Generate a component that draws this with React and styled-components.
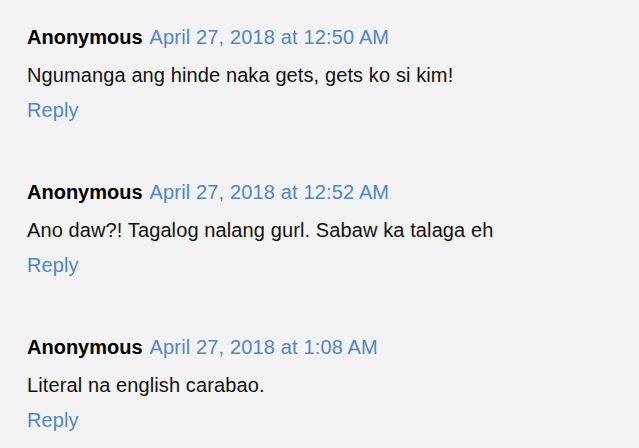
import React from "react";
import styled, { createGlobalStyle } from "styled-components";

const GlobalStyle = createGlobalStyle`
  html, body {
    margin: 0;
    background: #f3f3f3;
  }
`;

const comments = [
  {
    author: "Anonymous",
    date: "April 27, 2018 at 12:50 AM",
    text: "Ngumanga ang hinde naka gets, gets ko si kim!",
  },
  {
    author: "Anonymous",
    date: "April 27, 2018 at 12:52 AM",
    text: "Ano daw?! Tagalog nalang gurl. Sabaw ka talaga eh",
  },
  {
    author: "Anonymous",
    date: "April 27, 2018 at 1:08 AM",
    text: "Literal na english carabao.",
  },
];

export default function App() {
  return (
    <>
      <GlobalStyle />
      <CommentList>
        {comments.map((c, i) => (
          <Comment key={i}>
            <Header>
              <Author>{c.author}</Author>
              <DateLink href="#">{c.date}</DateLink>
            </Header>
            <Body>{c.text}</Body>
            <ReplyLink href="#">Reply</ReplyLink>
          </Comment>
        ))}
      </CommentList>
    </>
  );
}

const CommentList = styled.div`
  display: flex;
  flex-direction: column;
  gap: 58px;
  padding: 25px 0 0 27px;
  font-family: "Liberation Sans", Arial, sans-serif;
  font-size: 20px;
  line-height: 24px;
  color: #111;
`;

const Comment = styled.div`
  display: flex;
  flex-direction: column;
  align-items: flex-start;
`;

const Header = styled.div`
  display: flex;
  gap: 7px;
`;

const Author = styled.span`
  font-weight: bold;
  color: #000;
`;

const DateLink = styled.a`
  color: #5186c6;
  text-decoration: none;
  letter-spacing: 0.15px;
`;

const Body = styled.p`
  margin: 14px 0 11px;
  letter-spacing: 0.11px;
`;

const ReplyLink = styled.a`
  color: #5186c6;
  text-decoration: none;
  letter-spacing: 0.1px;
`;
